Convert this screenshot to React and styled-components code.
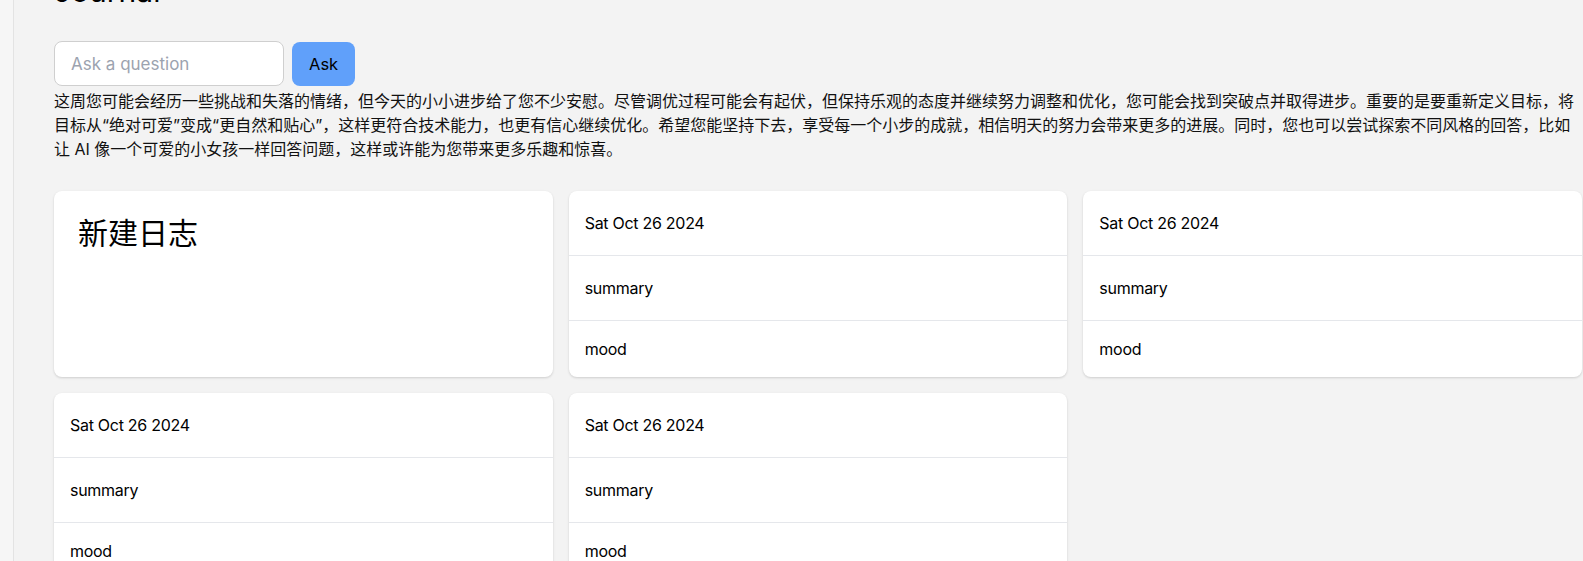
import React from 'react'
import styled, { createGlobalStyle } from 'styled-components'

const GlobalStyle = createGlobalStyle`
  html, body {
    margin: 0;
    padding: 0;
    background: #f3f3f3;
    overflow: hidden;
  }
  body {
    font-family: Inter, "Noto Sans CJK SC", sans-serif;
    color: #000;
  }
`

const Layout = styled.div`
  display: flex;
  min-height: 100vh;
`

const Sidebar = styled.aside`
  width: 13px;
  flex: 0 0 13px;
  background: #f6f6f6;
  border-right: 1px solid #e3e3e3;
`

const Main = styled.main`
  flex: 1;
  min-width: 0;
  margin-top: -27px;
  padding: 0 1px 0 40px;
`

const Title = styled.h1`
  margin: 0 0 32px;
  font-size: 30px;
  line-height: 36px;
  font-weight: 400;
`

const AskRow = styled.form`
  display: flex;
  align-items: center;
  gap: 8px;
`

const AskInput = styled.input`
  box-sizing: border-box;
  width: 230px;
  height: 45px;
  padding: 0 16px;
  border: 1px solid #cfcfcf;
  border-radius: 8px;
  background: #fff;
  font: inherit;
  font-size: 17px;
  outline: none;

  &::placeholder {
    color: #9ca3af;
  }
`

const AskButton = styled.button`
  height: 44px;
  padding: 0 17px;
  border: none;
  border-radius: 8px;
  background: #60a0fa;
  color: #000;
  font: inherit;
  font-size: 16.5px;
`

const Answer = styled.p`
  margin: 3px 0 30px;
  font-size: 16px;
  line-height: 24px;
  color: #111;
`

const Grid = styled.div`
  display: grid;
  grid-template-columns: repeat(3, 1fr);
  gap: 16px;
`

const Card = styled.div`
  background: #fff;
  border-radius: 8px;
  overflow: hidden;
  box-shadow: 0 1px 3px rgba(0, 0, 0, 0.1), 0 1px 2px rgba(0, 0, 0, 0.06);
`

const NewCard = styled(Card)`
  padding: 24px;
  font-size: 30px;
  line-height: 36px;
`

const Row = styled.div`
  padding: ${p => (p.$last ? '16px' : '20px')} 16px;
  font-size: 16px;
  line-height: 24px;
  letter-spacing: -0.28px;
  & + & {
    border-top: 1px solid #e5e7eb;
  }
`

const entries = [1, 2, 3, 4].map(id => ({
  id,
  date: 'Sat Oct 26 2024',
  summary: 'summary',
  mood: 'mood',
}))

const answer =
  '这周您可能会经历一些挑战和失落的情绪，但今天的小小进步给了您不少安慰。尽管调优过程可能会有起伏，但保持乐观的态度并继续努力调整和优化，您可能会找到突破点并取得进步。重要的是要重新定义目标，将目标从“绝对可爱”变成“更自然和贴心”，这样更符合技术能力，也更有信心继续优化。希望您能坚持下去，享受每一个小步的成就，相信明天的努力会带来更多的进展。同时，您也可以尝试探索不同风格的回答，比如让 AI 像一个可爱的小女孩一样回答问题，这样或许能为您带来更多乐趣和惊喜。'

export default function App() {
  return (
    <Layout>
      <GlobalStyle />
      <Sidebar />
      <Main>
        <Title>Journal</Title>
        <AskRow onSubmit={e => e.preventDefault()}>
          <AskInput placeholder="Ask a question" />
          <AskButton type="submit">Ask</AskButton>
        </AskRow>
        <Answer>{answer}</Answer>
        <Grid>
          <NewCard>新建日志</NewCard>
          {entries.map(entry => (
            <Card key={entry.id}>
              <Row>{entry.date}</Row>
              <Row>{entry.summary}</Row>
              <Row $last>{entry.mood}</Row>
            </Card>
          ))}
        </Grid>
      </Main>
    </Layout>
  )
}
